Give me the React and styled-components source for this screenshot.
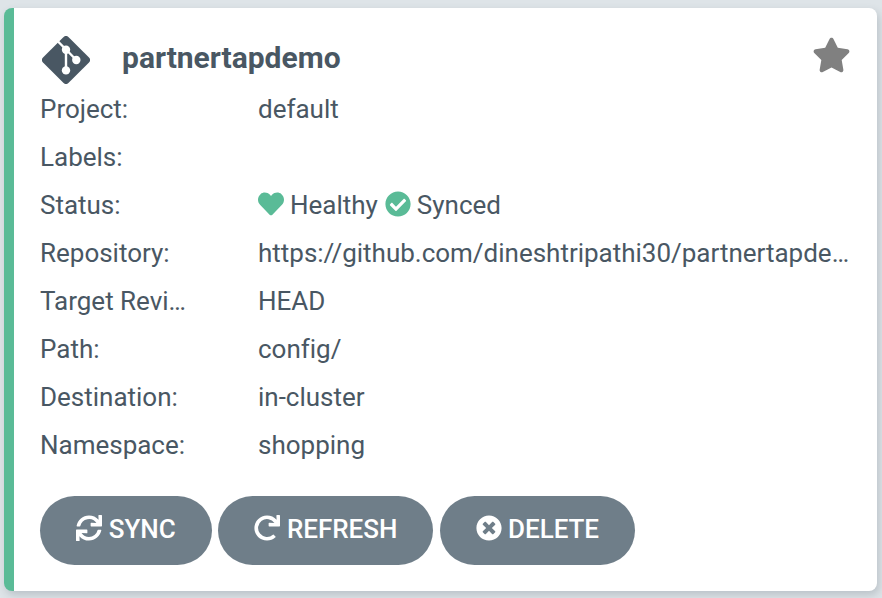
import React from "react";
import styled, { createGlobalStyle } from "styled-components";
import { FaHeart, FaCheckCircle, FaTimesCircle, FaSync, FaRedo } from "react-icons/fa";
import { FaStar } from "react-icons/fa6";

const GlobalStyle = createGlobalStyle`
  * { box-sizing: border-box; }
  body { margin: 0; background: #dee4e8; font-family: Roboto, "Liberation Sans", sans-serif; color: #495763; }
`;

const Page = styled.main`
  height: 598px;
  padding: 8px 5px 7px 4px;
  overflow: hidden;
`;

const Tile = styled.article`
  height: 583px;
  background: #fff;
  border-left: 10px solid #5abb97;
  border-radius: 8px;
  box-shadow: 2px 4px 8px rgba(60, 75, 85, 0.22);
  padding: 24px 26px 0;
`;

const Header = styled.header`
  display: flex;
  align-items: flex-start;
  height: 53px;
`;

const SourceIcon = styled.svg`
  width: 48px;
  height: 48px;
  margin: 4px 0 0 2px;
`;

const Title = styled.h1`
  flex: 1;
  margin: 0 0 0 32px;
  font-size: 30px;
  line-height: 52px;
  font-weight: 700;
`;

const Star = styled(FaStar)`
  width: 39px;
  height: 38px;
  margin-top: 4px;
  color: #808080;
`;

const Details = styled.dl`
  display: grid;
  grid-template-columns: 149px 594px;
  column-gap: 69px;
  grid-auto-rows: 48px;
  margin: 0;
  font-size: 26px;
  line-height: 48px;
  letter-spacing: -0.01px;
`;

const Cell = styled.dd`
  margin: 0;
  min-width: 0;
  overflow: hidden;
  text-overflow: ellipsis;
  white-space: nowrap;
`;

const StatusRow = styled.span`
  display: flex;
  align-items: center;
  svg { width: 26px; height: 26px; color: #5abb97; margin: -2px 6px 0 0; }
  span { margin-right: 7px; }
`;

const Actions = styled.footer`
  display: flex;
  gap: 6.4px;
  margin-top: 27px;
`;

const Button = styled.button`
  display: flex;
  align-items: center;
  justify-content: center;
  gap: 6.5px;
  width: ${(p) => p.$width}px;
  height: 69px;
  padding: 0 0 4px;
  border: 0;
  border-radius: 35px;
  background: #6f7e89;
  color: #fff;
  font: 500 26px Roboto, sans-serif;
  letter-spacing: -0.03px;
  svg { width: 26px; height: 26px; margin-top: -1px; }
`;

const GitIcon = () => (
  <SourceIcon viewBox="0 0 48 48">
    <path fill="#495763" d="M21.6 1a3.4 3.4 0 0 1 4.8 0L47 21.6a3.4 3.4 0 0 1 0 4.8L26.4 47a3.4 3.4 0 0 1-4.8 0L1 26.4a3.4 3.4 0 0 1 0-4.8z" />
    <path stroke="#fff" strokeWidth="2.4" fill="none" d="M16 5.5L24 13.5L34.3 24M24 13.5V34.5" />
    <g fill="#fff"><circle cx="24" cy="13.7" r="4.2" /><circle cx="34.3" cy="24" r="4.2" /><circle cx="24" cy="34.4" r="4.2" /></g>
  </SourceIcon>
);

export default function App() {
  return (
    <Page>
      <GlobalStyle />
      <Tile>
        <Header>
          <GitIcon />
          <Title>partnertapdemo</Title>
          <Star />
        </Header>
        <Details>
          <Cell as="dt">Project:</Cell><Cell>default</Cell>
          <Cell as="dt">Labels:</Cell><Cell />
          <Cell as="dt">Status:</Cell>
          <Cell><StatusRow><FaHeart /><span>Healthy</span><FaCheckCircle /><span>Synced</span></StatusRow></Cell>
          <Cell as="dt">Repository:</Cell><Cell>https://github.com/dineshtripathi30/partnertapdemo.git</Cell>
          <Cell as="dt">Target Revision:</Cell><Cell>HEAD</Cell>
          <Cell as="dt">Path:</Cell><Cell>config/</Cell>
          <Cell as="dt">Destination:</Cell><Cell>in-cluster</Cell>
          <Cell as="dt">Namespace:</Cell><Cell>shopping</Cell>
        </Details>
        <Actions>
          <Button $width={172}><FaSync />SYNC</Button>
          <Button $width={215}><FaRedo />REFRESH</Button>
          <Button $width={195}><FaTimesCircle />DELETE</Button>
        </Actions>
      </Tile>
    </Page>
  );
}
